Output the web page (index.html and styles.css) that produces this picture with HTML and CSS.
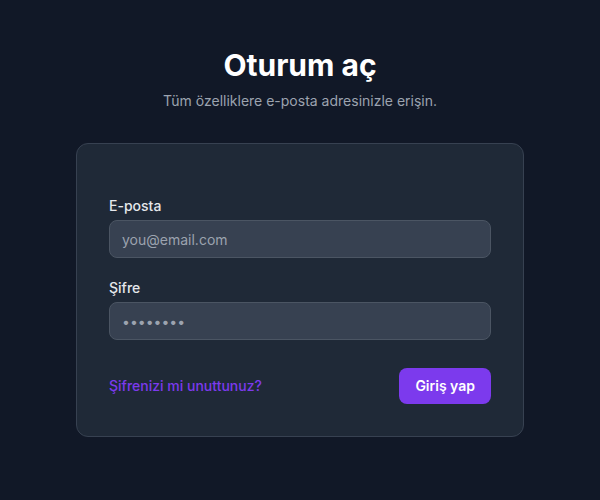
FILE: index.html
```html
<!DOCTYPE html>
<html lang="tr">
<head>
    <meta charset="UTF-8">
    <meta name="viewport" content="width=device-width, initial-scale=1.0">
    <title>Oturum aç</title>
    <link rel="stylesheet" href="styles.css">
</head>
<body>
    <main class="page">
        <header class="intro">
            <h1>Oturum aç</h1>
            <p>Tüm özelliklere e-posta adresinizle erişin.</p>
        </header>

        <form class="card" id="login-form">
            <div class="field">
                <label for="email">E-posta</label>
                <input type="email" id="email" placeholder="you@email.com">
            </div>

            <div class="field">
                <label for="password">Şifre</label>
                <input type="password" id="password" value="12345678">
            </div>

            <div class="actions">
                <a href="#" class="forgot">Şifrenizi mi unuttunuz?</a>
                <button type="submit">Giriş yap</button>
            </div>
        </form>
    </main>
</body>
</html>
```

FILE: styles.css
```css
:root {
    --bg-color: #111827;
    --card-color: #1f2937;
    --card-border: #374151;
    --input-color: #374151;
    --input-border: #4b5563;
    --text-color: #ffffff;
    --label-color: #e5e7eb;
    --muted-color: #9ca3af;
    --primary-color: #7c3aed;
}
* {
    box-sizing: border-box;
}
body {
    margin: 0;
    background-color: var(--bg-color);
    font-family: Inter, 'Noto Sans', sans-serif;
    color: var(--text-color);
    min-height: 100vh;
}
.page {
    display: flex;
    flex-direction: column;
    align-items: center;
    padding-top: 47px;
}
.intro {
    text-align: center;
    margin-bottom: 32px;
}
.intro h1 {
    margin: 0;
    font-size: 30px;
    line-height: 36px;
    font-weight: 700;
}
.intro p {
    margin: 8px 0 0;
    font-size: 14px;
    line-height: 20px;
    color: var(--muted-color);
}
.card {
    width: 448px;
    background-color: var(--card-color);
    border: 1px solid var(--card-border);
    border-radius: 12px;
    padding: 52px 32px 32px;
    display: flex;
    flex-direction: column;
    gap: 20px;
}
.field label {
    display: block;
    font-size: 14px;
    line-height: 20px;
    font-weight: 500;
    color: var(--label-color);
    margin-bottom: 4px;
}
.field input {
    width: 100%;
    height: 38px;
    padding: 0 12px;
    background-color: var(--input-color);
    border: 1px solid var(--input-border);
    border-radius: 8px;
    font-family: inherit;
    font-size: 14px;
    color: var(--muted-color);
    outline: none;
}
.field input::placeholder {
    color: var(--muted-color);
}
.actions {
    display: flex;
    justify-content: space-between;
    align-items: center;
    margin-top: 8px;
}
.forgot {
    font-size: 14px;
    line-height: 20px;
    font-weight: 500;
    color: var(--primary-color);
    text-decoration: none;
}
button {
    background-color: var(--primary-color);
    color: var(--text-color);
    border: none;
    border-radius: 8px;
    padding: 8px 16px;
    font-family: inherit;
    font-size: 14px;
    line-height: 20px;
    font-weight: 600;
    cursor: pointer;
}
```
